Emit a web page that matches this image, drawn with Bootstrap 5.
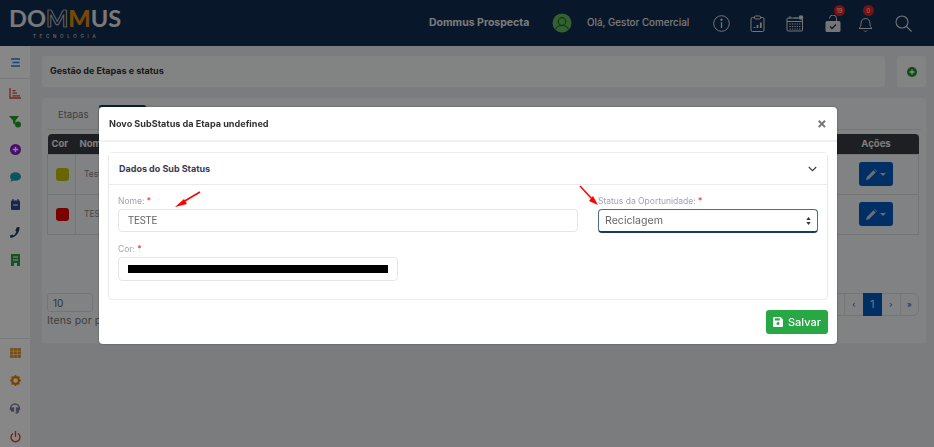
<!DOCTYPE html>
<html lang="pt-BR">
<head>
<meta charset="utf-8">
<title>Gestão de Etapas e status</title>
<link href="https://cdn.jsdelivr.net/npm/bootstrap@5.3.0/dist/css/bootstrap.min.css" rel="stylesheet">
<style>
html,body{height:100%;overflow:hidden}
body{font-family:"Inter","Open Sans",sans-serif;background:#e8eaed;color:#444;font-size:10px}
.topbar{height:46px;background:#102c4e;color:#eee}
.logo-box{width:140px;padding:7px 0 0 9px;line-height:1}
.logo-word{font-family:"Lato",sans-serif;font-weight:700;font-size:23.6px;color:#e4e4e4;line-height:23px;height:23px;white-space:nowrap}
.logo-thin{color:transparent;-webkit-text-stroke:.7px #e4e4e4}
.logo-or{color:#e08a08;font-weight:900}
.logo-sub{font-size:4.5px;letter-spacing:3.7px;margin:5px 0 0 24px;color:#e4e4e4}
.top-prod{font-weight:700;font-size:10.5px;width:123px;color:#e8e8e8;white-space:nowrap}
.top-hello{font-weight:500;font-size:9.8px;width:117px;white-space:nowrap;color:#e8e8e8}
.top-right{margin-left:auto}
.ava-pic{margin-right:15px;flex:none}
.tico{width:38px;display:flex;justify-content:center;position:relative}
.tico-a{width:34px}.tico-b{width:26px}.tico-c{width:50px}
.tbadge{position:absolute;top:-10px;left:20px;width:11px;height:11px;border-radius:50%;background:#e82020;color:#eee;font-size:6px;line-height:11px;text-align:center;padding:0}
.tbadge-s{left:11px}
.end-gap{width:6px}
.sidebar{width:30px;background:#fff;flex:none}
.side-item{height:27.7px;display:flex;align-items:center;justify-content:center;flex:none}
.side-first{height:33px;border-bottom:1px solid #e6e6e6;margin-bottom:1px}
.side-low{margin-top:64px;border-top:1px solid #e6e6e6;flex:none}
.side-low .side-item{height:28px}
.main-wrap{padding:9px 7px 0 11px;min-width:0}
.box-white{background:#f6f7f8;border:1px solid #ececec;border-radius:4px}
.title-box{height:33px;font-weight:700;font-size:9px;color:#333;padding:0 8px 2px}
.plus-box{width:31px;height:33px;margin-left:10px}
.content-box{height:247px;margin-top:9px;padding:0 5px;background:#f4f5f7;width:886px}
.tab-row{height:32px;border-bottom:1px solid #dedede;padding-top:7px;padding-left:5px}
.tab-one{font-size:9.5px;color:#777;padding:3px 6px;width:46px}
.tab-on{width:49px;height:25px;border:1px solid #ddd;border-top:2px solid #143a6a;border-radius:4px 4px 0 0;background:#fff}
.tb{margin:4px 0 0 0;width:872px;font-size:8.5px;--bs-table-bg:transparent;border-color:#ddd}
.tb th{background:#3a3c40;color:#eee;height:20px;padding:0 0 0 4px;vertical-align:middle;font-size:9.5px;font-weight:700;border:0}
.tb td{height:40px;padding:0 0 0 8px;vertical-align:middle;border:1px solid #ddd;color:#888}
.tb th:first-child{border-radius:4px 0 0 0;width:28px}
.tb th:last-child{border-radius:0 4px 0 0;text-align:center;padding:0}
.swatch{display:block;width:13px;height:13px;border-radius:3px}
.sw-y{background:#c4c000}.sw-r{background:#e40000}
.cell-act{text-align:center;padding:0!important;width:85px}
.btn-act{width:34px;height:24px;padding:0;background:#0059bf;border:0;border-radius:3px;display:inline-flex;align-items:center;justify-content:center;gap:3px}
.caret-w{width:0;height:0;border-left:3px solid transparent;border-right:3px solid transparent;border-top:3px solid #ccc}
.foot-row{margin-top:58px;width:872px}
.sel-10{width:46px;height:19px;border:1px solid #ddd;border-radius:3px;padding:2px 5px;font-size:10px;color:#666;line-height:14px}
.items-txt{font-size:10.5px;letter-spacing:.1px;color:#777;margin-top:1px}
.pg-mini{--bs-pagination-padding-x:0;--bs-pagination-padding-y:0}
.pg-mini .page-link{width:19.5px;height:23px;line-height:20px;font-size:8px;text-align:center;background:#f4f5f7;color:#0059bf;border-color:#ddd}
.pg-mini .active .page-link{background:#0059bf;border-color:#0059bf;color:#ddd;font-size:11px}
.modal-backdrop.show{opacity:.47}
.mdl-box.modal-dialog{max-width:738px;width:738px;margin:107px 0 0 99px}
.mdl-box .modal-content{height:237px;border:0;border-radius:4px;box-shadow:0 0 2px rgba(0,0,0,.4)}
.mdl-box .modal-header{height:35px;padding:0 10px;border-bottom:2px solid #eef0f3}
.mdl-title{font-size:9.1px;font-weight:700;color:#333}
.mdl-x{font-size:15px;font-weight:700;color:#777;line-height:1;background:none;border:0;padding:0}
.mdl-box .modal-body{padding:10px 9px 0 9px}
.inner-card{height:148px;border:1px solid #e8eaee;border-radius:4px}
.inner-head{height:32px;padding:0 10px;background:#fff;border-bottom:1px solid #e8eaee;font-weight:700;font-size:9px;color:#3b3a55}
.inner-body{padding:9px 9px 0}
.frow{--bs-gutter-x:20px;--bs-gutter-y:0}
.flabel{font-size:8.5px;color:#a09fb5;margin:0 0 1px;line-height:14px;height:14px;white-space:nowrap;display:block}
.req{color:#e33}
.fld.form-control{height:23px;padding:0 9px;font-size:10px;color:#666;border:1px solid #e3e6ea;border-radius:4px;font-family:"Roboto",sans-serif}
.fld-sel.form-select{height:24px;padding:0 6px;font-size:10.6px;color:#666;border:1px solid #4a6b95;border-bottom:2px solid #143a6a;border-radius:4px;box-shadow:none;background-image:none}
.sel-arrow{position:absolute;right:7px;top:8px}
.fld-col.form-control{height:24px;padding:7px 9px;border:1px solid #e3e6ea;border-radius:4px}
.fld-col::-webkit-color-swatch-wrapper{padding:0}
.fld-col::-webkit-color-swatch{border:0;border-radius:0}
.gap-col{margin-top:9px}
.save-row{padding-top:10px}
.btn-save.btn{width:62px;height:24px;padding:0;font-size:11px;font-weight:500;background:#28a745;border:0;border-radius:3px;display:flex;align-items:center;justify-content:center;gap:5px;color:#fff}
.arrow-over{position:fixed;left:0;top:0;width:934px;height:447px;pointer-events:none;z-index:1060}
</style>
</head>
<body>
<header class="topbar d-flex align-items-center">
  <div class="logo-box align-self-start">
    <div class="logo-word">DO<span class="logo-thin">M</span><span class="logo-or">M</span>US</div>
    <div class="logo-sub">TECNOLOGIA</div>
  </div>
  <div class="top-right d-flex align-items-center">
    <div class="top-prod">Dommus Prospecta</div>
    <svg width="20" height="20" viewBox="0 0 20 20" class="ava-pic"><circle cx="10" cy="10" r="9.500" fill="#62b85e"/><circle cx="10" cy="8.500" r="3.800" fill="none" stroke="#1c6d1c" stroke-width="1.200"/><path d="M3.500 16c1.500-3 4-3.500 6.500-3.500s5 .5 6.500 3.500" fill="none" stroke="#1c6d1c" stroke-width="1.200"/></svg>
    <div class="top-hello">Olá, Gestor Comercial</div>
    <div class="d-flex align-items-center">
      <div class="tico tico-a"><svg width="17" height="17" viewBox="0 0 17 17" fill="none" stroke="#ddd"><circle cx="8.500" cy="8.500" r="7.800"/><path d="M8.500 7.200V13" stroke-width="1.300"/><circle cx="8.500" cy="4.800" r=".8" fill="#ddd"/></svg></div>
      <div class="tico"><svg width="15" height="17" viewBox="0 0 15 17" fill="none" stroke="#ddd"><rect x="1" y="2.500" width="13" height="14" rx="1.500"/><rect x="4.500" y="1" width="6" height="3" rx="1" fill="#102c4e"/><path d="M4.500 13v-1M7.500 13v-3M10.800 13V7.500" stroke-width="1.800"/></svg></div>
      <div class="tico"><svg width="18" height="17" viewBox="0 0 18 17" fill="none" stroke="#ddd"><rect x="1" y="3" width="15.500" height="13" rx="1"/><path d="M1 6.500h15.500M4 1v3M8 3h4"/><path d="M3.500 9h11M3.500 11.500h11M3.500 14h11" stroke-dasharray="1.300 1.100"/><circle cx="15" cy="2.500" r="2.300" fill="#ddd" stroke="none"/></svg></div>
      <div class="tico"><svg width="16" height="17" viewBox="0 0 16 17"><path d="M2 6h12a1.500 1.500 0 0 1 1.500 1.500v8A1.500 1.500 0 0 1 14 17H2A1.500 1.500 0 0 1 .5 15.500v-8A1.500 1.500 0 0 1 2 6z" fill="#ddd"/><path d="M4.500 3.500A3.500 3.500 0 0 1 11.500 3.500V6" fill="none" stroke="#ddd"/><path d="M5 11.500l2 2 4-4" fill="none" stroke="#102c4e" stroke-width="1.300"/></svg><span class="tbadge">19</span></div>
      <div class="tico tico-b"><svg width="15" height="17" viewBox="0 0 15 17" fill="none" stroke="#ddd"><path d="M1 13.500c1.500-1 2-2.500 2-5 0-3 1.800-5 4.500-5s4.500 2 4.500 5c0 2.500.5 4 2 5z"/><path d="M6 15.500a1.700 1.700 0 0 0 3 0"/></svg><span class="tbadge tbadge-s">0</span></div>
      <div class="tico tico-c"><svg width="17" height="17" viewBox="0 0 17 17" fill="none" stroke="#ddd" stroke-width="1.100"><circle cx="7" cy="7" r="6"/><path d="M11.500 11.500l5 5"/></svg></div>
    </div>
    <div class="end-gap"></div>
  </div>
</header>

<div class="d-flex" style="height:401px">
  <nav class="sidebar d-flex flex-column">
    <div class="side-item side-first"><svg width="11" height="9" viewBox="0 0 11 9" stroke="#2a7fe6" stroke-width="1.500"><path d="M1 1h9M2.500 4.500h7M1 8h9"/></svg></div>
    <div class="side-item"><svg width="12" height="11" viewBox="0 0 12 11" fill="none" stroke="#e04444" stroke-width="1.300"><path d="M1 0v10h11M3.500 7.800H11M3.500 5.200H8M3.500 2.600h3"/></svg></div>
    <div class="side-item"><svg width="13" height="12" viewBox="0 0 13 12"><path d="M0 0h10L6.500 4.500V9L4 7V4.500z" fill="#22a022"/><circle cx="9" cy="8.500" r="3" fill="#22a022"/></svg></div>
    <div class="side-item"><svg width="11" height="11" viewBox="0 0 11 11"><circle cx="5.500" cy="5.500" r="5.500" fill="#8a1ad0"/><path d="M5.500 2.800v5.400M2.800 5.500h5.400" stroke="#fff" stroke-width="1.400"/></svg></div>
    <div class="side-item"><svg width="11" height="10" viewBox="0 0 11 10"><ellipse cx="5.500" cy="4.500" rx="5.500" ry="4.300" fill="#15a0b2"/><path d="M1.500 6.500L.5 10l3.500-2z" fill="#15a0b2"/></svg></div>
    <div class="side-item"><svg width="9" height="11" viewBox="0 0 9 11"><rect y="1.500" width="9" height="9.500" rx="1" fill="#34429e"/><path d="M2 0v2M7 0v2" stroke="#34429e" stroke-width="1.200"/><path d="M2 6h5" stroke="#fff"/></svg></div>
    <div class="side-item"><svg width="10" height="11" viewBox="0 0 10 11"><path d="M9.500 0c.5 5-3.500 10.500-9 11L0 8.500l2.500-1 1 1c1.300-1 2.300-2.300 2.800-4l-1-1L6.800.3z" fill="#24405f"/></svg></div>
    <div class="side-item"><svg width="9" height="12" viewBox="0 0 9 12"><path d="M0 0h9v12H6V9H3v3H0z" fill="#309c42"/><path d="M2 3h5M2 6h5" stroke="#fff"/></svg></div>
    <div class="side-low">
      <div class="side-item"><svg width="11" height="10" viewBox="0 0 11 10"><rect width="11" height="10" rx="1" fill="#e0962c"/><path d="M0 3.300h11M0 6.600h11M3.700 0v10M7.300 0v10" stroke="#fff" stroke-width=".5"/></svg></div>
      <div class="side-item"><svg width="11" height="11" viewBox="0 0 11 11"><circle cx="5.500" cy="5.500" r="3.400" fill="none" stroke="#e08000" stroke-width="2.200"/><path d="M5.500 0v11M0 5.500h11M1.600 1.600l7.800 7.800M9.400 1.600l-7.800 7.800" stroke="#e08000" stroke-width="1.500" stroke-dasharray="1.700 7.600 1.700"/></svg></div>
      <div class="side-item"><svg width="12" height="11" viewBox="0 0 12 11" fill="none" stroke="#7a7f9a" stroke-width="1.300"><path d="M1.500 7V5.500a4.500 4.500 0 0 1 9 0V7"/><rect x="2.500" y="5" width="2" height="3" fill="#7a7f9a"/><rect x="7.500" y="5" width="2" height="3" fill="#7a7f9a"/><path d="M9.500 8c0 1.500-1.500 2-3 2"/></svg></div>
      <div class="side-item"><svg width="11" height="12" viewBox="0 0 11 12" fill="none" stroke="#e83232" stroke-width="1.300"><path d="M5.500 0v6"/><path d="M3 2.500a4.500 4.500 0 1 0 5 0"/></svg></div>
    </div>
  </nav>

  <main class="main-wrap flex-grow-1">
    <div class="d-flex">
      <div class="box-white title-box flex-grow-1 d-flex align-items-center">Gestão de Etapas e status</div>
      <div class="box-white plus-box d-flex align-items-center justify-content-center"><svg width="10" height="10" viewBox="0 0 10 10"><circle cx="5" cy="5" r="5" fill="#1f901f"/><path d="M5 2.500v5M2.500 5h5" stroke="#fff" stroke-width="1.300"/></svg></div>
    </div>
    <div class="box-white content-box">
      <div class="tab-row d-flex align-items-start">
        <div class="tab-one">Etapas</div>
        <div class="tab-on"></div>
      </div>
      <table class="table tb">
        <thead><tr><th>Cor</th><th>Nome</th><th>Ações</th></tr></thead>
        <tbody>
          <tr><td><span class="swatch sw-y"></span></td><td>Teste</td><td class="cell-act"><button class="btn-act" type="button" aria-label="Editar"><svg width="11" height="11" viewBox="0 0 11 11"><path d="M0 11l.8-3L7.500 1.300l2.200 2.200L3 10.200zM8.300.5l.5-.5 2.200 2.200-.5.500z" fill="#ccc"/></svg><span class="caret-w"></span></button></td></tr>
          <tr><td><span class="swatch sw-r"></span></td><td>TESTE</td><td class="cell-act"><button class="btn-act" type="button" aria-label="Editar"><svg width="11" height="11" viewBox="0 0 11 11"><path d="M0 11l.8-3L7.500 1.300l2.200 2.200L3 10.200zM8.300.5l.5-.5 2.200 2.200-.5.500z" fill="#ccc"/></svg><span class="caret-w"></span></button></td></tr>
        </tbody>
      </table>
      <div class="foot-row d-flex justify-content-between align-items-start">
        <div>
          <div class="sel-10">10</div>
          <div class="items-txt">Itens por página</div>
        </div>
        <ul class="pagination pg-mini mb-0">
          <li class="page-item"><a class="page-link" href="#">«</a></li>
          <li class="page-item"><a class="page-link" href="#">‹</a></li>
          <li class="page-item active"><a class="page-link" href="#">1</a></li>
          <li class="page-item"><a class="page-link" href="#">›</a></li>
          <li class="page-item"><a class="page-link" href="#">»</a></li>
        </ul>
      </div>
    </div>
  </main>
</div>

<div class="modal-backdrop show"></div>
<div class="modal show d-block" tabindex="-1" role="dialog" aria-modal="true">
  <div class="modal-dialog mdl-box">
    <div class="modal-content">
      <div class="modal-header">
        <div class="mdl-title">Novo SubStatus da Etapa undefined</div>
        <button type="button" class="mdl-x ms-auto" aria-label="Fechar">×</button>
      </div>
      <div class="modal-body">
        <div class="inner-card">
          <div class="inner-head d-flex align-items-center justify-content-between">
            <span>Dados do Sub Status</span>
            <svg width="9" height="6" viewBox="0 0 9 6" fill="none" stroke="#3b3a55" stroke-width="1.100"><path d="M.8 1l3.700 3.700L8.200 1"/></svg>
          </div>
          <div class="inner-body">
            <div class="row frow">
              <div class="col-8">
                <label class="flabel">Nome: <span class="req">*</span></label>
                <input class="form-control fld" type="text" value="TESTE">
              </div>
              <div class="col-4">
                <label class="flabel">Status da Oportunidade: <span class="req">*</span></label>
                <div class="position-relative">
                  <select class="form-select fld-sel"><option>Reciclagem</option></select>
                  <svg class="sel-arrow" width="5" height="8" viewBox="0 0 5 8"><path d="M2.500 0l2.200 3h-4.400zM2.500 8L.3 5h4.400z" fill="#333"/></svg>
                </div>
              </div>
            </div>
            <div class="row frow gap-col">
              <div class="col-5">
                <label class="flabel">Cor: <span class="req">*</span></label>
                <input class="form-control fld-col" type="color" value="#000000">
              </div>
            </div>
          </div>
        </div>
        <div class="save-row d-flex justify-content-end">
          <button type="button" class="btn btn-save"><svg width="10" height="10" viewBox="0 0 10 10"><path d="M1 0h6.500L10 2.500V9a1 1 0 0 1-1 1H1a1 1 0 0 1-1-1V1a1 1 0 0 1 1-1z" fill="#fff"/><rect x="1.800" y="1.300" width="5" height="2.200" fill="#28a745"/><circle cx="5" cy="6.600" r="1.500" fill="#28a745"/></svg>Salvar</button>
        </div>
      </div>
    </div>
  </div>
</div>

<svg class="arrow-over" viewBox="0 0 934 447" aria-hidden="true">
  <path d="M200 192L183 202" stroke="#f00" stroke-width="1.500"/>
  <path d="M175 207l9-8 3 5z" fill="#f00"/>
  <path d="M580 186l12 13" stroke="#f00" stroke-width="1.500"/>
  <path d="M598 205l-9-4 4-5z" fill="#f00"/>
</svg>
</body>
</html>
